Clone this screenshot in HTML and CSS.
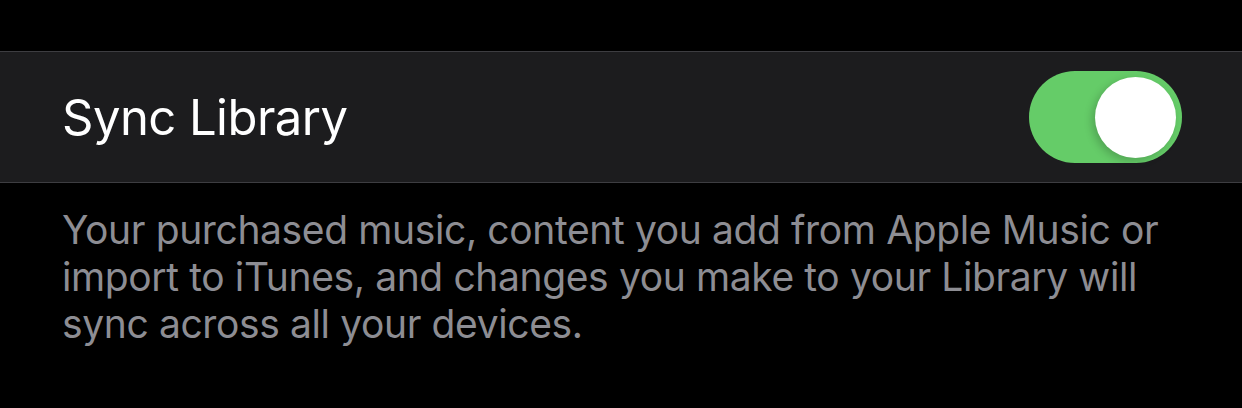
FILE: index.html
```html
<!DOCTYPE html>
<html lang="en">
<head>
    <meta charset="UTF-8">
    <title>Sync Library</title>
    <link rel="stylesheet" href="styles.css">
</head>
<body>
    <div class="group">
        <div class="cell">
            <span class="label">Sync Library</span>
            <div class="switch on">
                <div class="knob"></div>
            </div>
        </div>
    </div>
    <p class="footer">Your purchased music, content you add from Apple Music or import to iTunes, and changes you make to your Library will sync across all your devices.</p>
</body>
</html>
```

FILE: styles.css
```css
body {
    margin: 0;
    padding: 51px 0 0;
    background-color: #000;
    font-family: Inter, "Noto Sans", sans-serif;
}
.group {
    border-top: 1px solid #3d3d41;
    border-bottom: 1px solid #3d3d41;
    background-color: #1c1c1e;
}
.cell {
    height: 130px;
    display: flex;
    align-items: center;
    justify-content: space-between;
    padding: 0 60px 0 62px;
}
.label {
    color: #fff;
    font-size: 49px;
    letter-spacing: -0.55px;
}
.switch {
    width: 153px;
    height: 92px;
    border-radius: 46px;
    background-color: #65cc68;
    display: flex;
    align-items: center;
    justify-content: flex-end;
    padding: 0 6px;
    box-sizing: border-box;
}
.knob {
    width: 81px;
    height: 81px;
    border-radius: 50%;
    background-color: #fff;
    box-shadow: -3px 3px 8px rgba(0, 0, 0, 0.2);
}
.footer {
    margin: 0;
    padding: 23px 62px 0;
    color: #8d8d93;
    font-size: 39px;
    line-height: 47px;
    letter-spacing: -0.38px;
}
```
